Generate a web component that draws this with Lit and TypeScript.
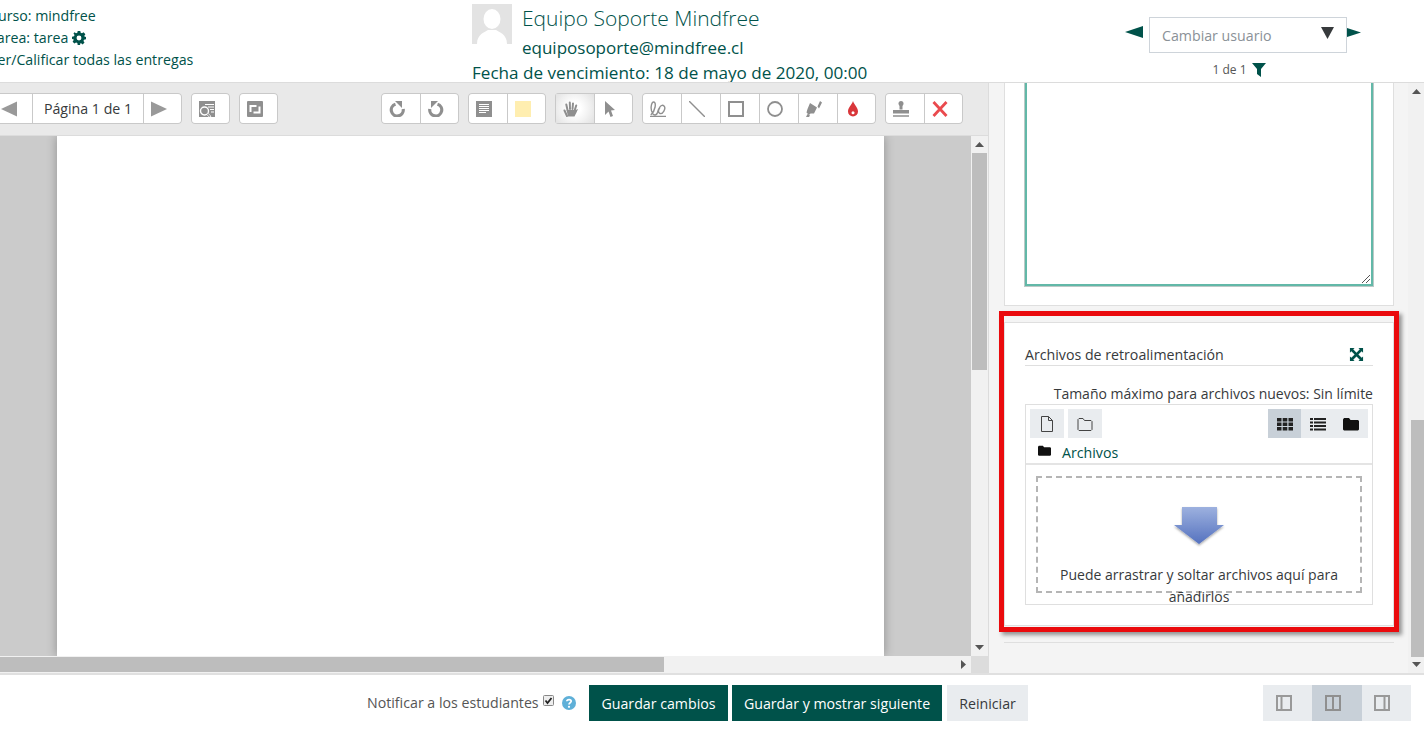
import { LitElement, html, css, svg } from 'lit';
import { customElement } from 'lit/decorators.js';

const G = '#8f8f8f';

// toolbar icons, all on a 16x16 box
const icons: Record<string, unknown> = {
  prev: svg`<polygon points="16,.5 16,15.500 0,8" fill="#999"/>`,
  next: svg`<polygon points="0,.5 0,15.500 16,8" fill="#999"/>`,
  search: svg`<rect x="0" y="0" width="16" height="16" fill="${G}"/><path d="M6 3.500h9M9 6h6M11 8.500h4M12 11h3" stroke="#fff" stroke-width="1"/><circle cx="5.500" cy="10" r="4" fill="${G}" stroke="#fff" stroke-width="1.400"/><path d="M8.500 13l3 3" stroke="#fff" stroke-width="2.400"/><path d="M8.500 13l2.500 2.500" stroke="${G}" stroke-width="1.200"/>`,
  expand: svg`<rect x="0" y="0" width="16" height="16" rx="1" fill="${G}"/><path d="M3.500 11V5h6M12.500 5.500v6h-6" fill="none" stroke="#fff" stroke-width="2"/>`,
  ccw: svg`<path d="M6.500 3.200A6 6 0 1 0 14.200 8" fill="none" stroke="${G}" stroke-width="3.200"/><polygon points="6,0 13,0 13,7" fill="${G}"/>`,
  cw: svg`<path d="M9.500 3.200A6 6 0 1 1 1.800 8" fill="none" stroke="${G}" stroke-width="3.200"/><polygon points="10,0 3,0 3,7" fill="${G}"/>`,
  note: svg`<rect x="0" y="0" width="16" height="16" fill="${G}"/><path d="M3 3.500h10M3 5.500h10M3 7.500h10M3 9.500h10M3 11.500h7" stroke="#fff" stroke-width="1"/>`,
  swatch: svg`<rect x="0" y="0" width="16" height="16" fill="#ffeeb0"/>`,
  hand: svg`<path d="M4 15L1.500 9.500M4.500 9L3.300 3.500M7 8L6.800 1.500M9.500 8L10 2.500M11.800 9L13.200 4.500" stroke="${G}" stroke-width="2" stroke-linecap="round"/><path d="M3.500 9h9L15 8c-1 3-2.500 5-3.500 7.500H5z" fill="${G}"/>`,
  pointer: svg`<polygon points="3,0 13,9 9,9.500 11,15 8.500,16 6.500,10.500 3,14" fill="${G}"/>`,
  draw: svg`<path d="M0 15.300h16" stroke="${G}" stroke-width="1.300"/><path d="M.8 14C5.500 10 6.500 1 3.800 1S-.2 9 3 13c2 2 4 .5 4.500-1.500C8.500 7 11.500 2.500 14 5s-1.500 8.500-4 7.500S8.500 8 10 7" fill="none" stroke="${G}" stroke-width="1.400"/>`,
  line: svg`<path d="M0 0l16 16" stroke="${G}" stroke-width="1.400"/>`,
  rect: svg`<rect x="1" y="1" width="14" height="14" fill="none" stroke="${G}" stroke-width="2"/>`,
  oval: svg`<circle cx="8" cy="8" r="7" fill="none" stroke="${G}" stroke-width="1.800"/>`,
  marker: svg`<path d="M4 2l7 4.500-3 6H4.500L3 14 .5 11.500 1.500 8zM11.500 5.500L14 0l2 1.500-3 6zM0 16l1.500-3 2.500 1.500-1 1.500z" fill="${G}"/>`,
  drop: svg`<path d="M8 0c1.300 4 5 6.500 5 10.500a5 5 0 0 1-10 0C3 6.500 6.700 4 8 0z" fill="#d9363a"/><circle cx="8" cy="11.800" r="1.500" fill="#fff"/>`,
  stamp: svg`<circle cx="8" cy="2.600" r="2.500" fill="${G}"/><path d="M6.500 4h3v4.500h-3zM0 9h16v3.500H0z" fill="${G}"/><path d="M0 15h16" stroke="${G}" stroke-width="1.400"/>`,
  del: svg`<path d="M1.500 1l13 14M14.500 1l-13 14" stroke="#ea4a4e" stroke-width="2.800"/>`,
};

const ic = (name: string) => html`<svg class="tool-icon" viewBox="0 0 16 16">${icons[name]}</svg>`;

const toolGroups = [
  ['ccw', 'cw'],
  ['note', 'swatch'],
  ['hand', 'pointer'],
  ['draw', 'line', 'rect', 'oval', 'marker', 'drop'],
  ['stamp', 'del'],
];

@customElement('app-root')
export class AppRoot extends LitElement {
  static styles = css`
    :host {
      display: flex;
      flex-direction: column;
      width: 1424px;
      height: 729px;
      position: relative;
      overflow: hidden;
      background: #fff;
      font-family: 'Open Sans', 'Noto Sans', sans-serif;
      font-size: 14.200px;
      color: #373a3c;
    }
    a { color: #00524a; text-decoration: none; }

    /* header */
    .header {
      height: 82px;
      flex: none;
      display: flex;
      border-bottom: 1px solid #dcdcdc;
      overflow: hidden;
    }
    .crumbs {
      width: 472px;
      flex: none;
      margin-left: -11px;
      margin-right: 11px;
      padding-top: 5px;
      line-height: 22px;
      color: #00524a;
    }
    .gear { width: 14px; height: 14px; vertical-align: -2px; margin-left: 0; }
    .user { width: 653px; flex: none; padding-top: 4px; color: #00524a; }
    .user-top { display: flex; gap: 10px; }
    .avatar { width: 40px; height: 40px; background: #e3e3e3; flex: none; }
    .user-name { font-size: 21px; font-weight: 300; line-height: 29px; white-space: nowrap; }
    .user-mail { font-size: 17px; font-weight: 400; line-height: 27px; margin-top: 1px; }
    .user-due { font-size: 17.100px; line-height: 24px; white-space: nowrap; }
    .switcher { width: 240px; flex: none; padding-top: 17px; }
    .switch-row { display: flex; align-items: flex-start; }
    .arrow { width: 18px; height: 12px; margin: 9px 0 0; fill: #00524a; flex: none; }
    .arrow.right { width: 14px; height: 9px; margin-top: 11px; }
    .select {
      width: 198px;
      height: 36px;
      flex: none;
      box-sizing: border-box;
      margin-left: 6px;
      border: 1px solid #ced4da;
      padding: 0 12px;
      display: flex;
      justify-content: space-between;
      line-height: 35px;
      color: #8a9197;
    }
    .caret { width: 13px; height: 12px; margin: 9px 0 0 0; fill: #373a3c; }
    .count {
      display: flex;
      justify-content: center;
      align-items: center;
      gap: 5px;
      width: 222px;
      margin-top: 9px;
      margin-left: 3px;
      font-size: 12px;
      line-height: 16px;
      color: #555;
    }
    .funnel { width: 14px; height: 14px; fill: #00524a; }

    /* main area */
    .main { flex: 1; min-height: 0; display: flex; }
    .doc {
      width: 988px;
      flex: none;
      display: flex;
      flex-direction: column;
      border-right: 1px solid #dcdcdc;
    }
    .tools {
      height: 53px;
      flex: none;
      box-sizing: border-box;
      background: #e9e9e9;
      border-bottom: 1px solid #dcdcdc;
      padding-top: 10px;
      display: flex;
      align-items: flex-start;
      gap: 9px;
    }
    .group {
      display: flex;
      height: 31px;
      background: #fff;
      border-radius: 4px;
      box-shadow: inset 0 0 0 1px #c9c9c9;
      overflow: hidden;
    }
    .group.first { margin-left: -7px; }
    .group.rotate { margin-left: 94.100px; }
    .tool {
      width: 39px;
      box-sizing: border-box;
      padding-right: 8px;
      display: flex;
      align-items: center;
      justify-content: center;
    }
    .tool + .tool { border-left: 1px solid #c9c9c9; }
    .tool.on {
      background: radial-gradient(circle, #fff 25%, #e0e0e0 100%);
      box-shadow: inset 1px 1px 0 #c9c9c9, inset 0 -1px 0 #c9c9c9;
    }
    .tool-icon { width: 16px; height: 16px; flex: none; }
    .tool.wide { width: 111px; padding-right: 0; white-space: nowrap; }

    .viewer {
      flex: 1;
      min-height: 0;
      display: grid;
      grid-template-columns: 1fr 17px;
      grid-template-rows: 1fr 17px;
    }
    .canvas {
      background: #cbcbcb;
      padding-left: 57px;
      overflow: hidden;
    }
    .page {
      width: 827px;
      height: 100%;
      background: #fff;
      box-shadow: 0 0 10px rgba(0, 0, 0, 0.3);
    }
    .vbar {
      background: #f1f1f1;
      display: flex;
      flex-direction: column;
      align-items: center;
      padding-top: 17px;
      position: relative;
    }
    .vthumb { width: 15px; height: 217px; background: #bdbdbd; }
    .sb-arrow { width: 9px; height: 5px; fill: #555; position: absolute; }
    .sb-arrow.up { top: 6px; }
    .sb-arrow.down { bottom: 6px; }
    .hbar { background: #f1f1f1; display: flex; position: relative; padding: 1px 0; }
    .hthumb { width: 664px; background: #bdbdbd; }
    .hbar .sb-arrow { width: 5px; height: 9px; right: 5px; top: 4px; }
    .corner { background: #dcdcdc; }

    /* right panel */
    .side {
      flex: 1;
      min-width: 0;
      background: #f4f4f4;
      display: flex;
    }
    .side-body { flex: 1; padding-left: 15px; overflow: hidden; }
    .card {
      width: 390px;
      box-sizing: border-box;
      background: #fff;
      border: 1px solid #dfdfdf;
    }
    .card.notes { height: 223px; border-top: 0; padding: 0 20px; }
    .notes-box {
      height: 203px;
      box-sizing: border-box;
      background: #fff;
      border: 2px solid #62b8a8;
      border-top: 0;
      box-shadow: 0 0 0 1px #bcc9c6;
      position: relative;
    }
    .grip { position: absolute; right: 0; bottom: 0; width: 10px; height: 10px; }
    .card.files { height: 304px; margin-top: 16px; padding: 0 20px; }
    .files-title {
      display: flex;
      justify-content: space-between;
      margin-top: 22px;
      height: 20px;
      line-height: 19px;
      border-bottom: 1px solid #dfdfdf;
    }
    .expand { width: 15px; height: 15px; margin: 2px 9px 0 0; fill: #00524a; }
    .limit {
      text-align: right;
      font-size: 14px;
      line-height: 20px;
      margin-top: 18px;
      white-space: nowrap;
    }
    .picker {
      height: 201px;
      box-sizing: border-box;
      border: 1px solid #dfdfdf;
      display: flex;
      flex-direction: column;
    }
    .picker-tools { display: flex; gap: 4px; padding: 4px 4px 0; }
    .pbtn {
      width: 34px;
      height: 29px;
      background: #e9ecef;
      display: flex;
      align-items: center;
      justify-content: center;
    }
    .pbtn svg { width: 16px; height: 16px; }
    .views { display: flex; margin-left: auto; }
    .views .pbtn { width: 33.400px; }
    .views .pbtn.on { background: #c8d0d8; }
    .path {
      height: 27px;
      flex: none;
      box-sizing: border-box;
      border-bottom: 2px solid #e4e4e4;
      display: flex;
      align-items: center;
      gap: 11px;
      padding-left: 12px;
      line-height: 30px;
    }
    .path svg { width: 13px; height: 13px; margin-top: -1px; }
    .path a { margin-top: 4px; }
    .drop {
      height: 117px;
      box-sizing: border-box;
      margin: 11px 10px 0;
      border: 2px dashed #b5b5b5;
      text-align: center;
      font-size: 14px;
      line-height: 22px;
    }
    .drop svg { display: block; width: 52px; height: 42px; margin: 28px auto 16px; }
    .rule { height: 1px; width: 390px; background: #dfdfdf; margin-top: 16px; }
    .sidebar-scroll {
      width: 16px;
      flex: none;
      background: #f1f1f1;
      display: flex;
      flex-direction: column;
      justify-content: flex-end;
      align-items: flex-end;
      padding-bottom: 16px;
      position: relative;
    }
    .sidebar-scroll .sb-arrow { right: 3px; }
    .side-thumb { width: 13px; height: 237px; background: #bdbdbd; }

    /* highlight box drawn on the screenshot */
    .mark {
      position: absolute;
      left: 999px;
      top: 311px;
      width: 400px;
      height: 321px;
      box-sizing: border-box;
      border: 5px solid #ea0a0d;
      box-shadow: 3px 3px 4px rgba(0, 0, 0, 0.4);
      pointer-events: none;
    }

    /* footer */
    .footer {
      height: 56px;
      flex: none;
      box-sizing: border-box;
      border-top: 2px solid #e0e0e0;
      padding-top: 10px;
      display: flex;
      align-items: flex-start;
    }
    .notify {
      margin-left: 367px;
      width: 209px;
      flex: none;
      display: flex;
      align-items: center;
      height: 34px;
      white-space: nowrap;
      color: #555;
    }
    .check { width: 11px; height: 11px; margin: -3px 0 0 4px; flex: none; }
    .help { width: 14px; height: 14px; margin: 2px 0 0 8px; flex: none; }
    .btn {
      height: 36px;
      box-sizing: border-box;
      display: flex;
      align-items: center;
      justify-content: center;
      white-space: nowrap;
    }
    .btn.primary { background: #00524a; color: #fff; }
    .btn.save { width: 139px; margin-left: 13px; }
    .btn.next { width: 210px; margin-left: 4px; }
    .btn.reset { width: 81px; margin-left: 5px; background: #e9ecef; color: #373a3c; }
    .layouts { display: flex; margin-left: auto; margin-right: 13px; }
    .layout {
      width: 49.300px;
      height: 36px;
      box-sizing: border-box;
      padding-right: 8px;
      background: #e9ecef;
      display: flex;
      align-items: center;
      justify-content: center;
    }
    .layout.on { background: #c8d0d8; }
    .layout svg { width: 16px; height: 16px; }
  `;

  renderToolbar() {
    return html`
      <div class="tools">
        <div class="group first">
          <div class="tool">${ic('prev')}</div>
          <div class="tool wide">Página 1 de 1</div>
          <div class="tool">${ic('next')}</div>
        </div>
        <div class="group"><div class="tool">${ic('search')}</div></div>
        <div class="group"><div class="tool">${ic('expand')}</div></div>
        ${toolGroups.map((g, i) => html`
          <div class="group ${i === 0 ? 'rotate' : ''}">
            ${g.map(n => html`<div class="tool ${n === 'hand' ? 'on' : ''}">${ic(n)}</div>`)}
          </div>
        `)}
      </div>
    `;
  }

  renderFiles() {
    return html`
      <div class="card files">
        <div class="files-title">
          <span>Archivos de retroalimentación</span>
          <svg class="expand" viewBox="0 0 16 16">
            <path d="M1 1h5L4.500 2.500 8 6l3.500-3.500L10 1h5v5l-1.500-1.500L10 8l3.500 3.500L15 10v5h-5l1.500-1.500L8 10l-3.500 3.500L6 15H1v-5l1.500 1.500L6 8 2.500 4.500 1 6z"/>
          </svg>
        </div>
        <div class="limit">Tamaño máximo para archivos nuevos: Sin límite</div>
        <div class="picker">
          <div class="picker-tools">
            <div class="pbtn">
              <svg viewBox="0 0 16 16"><path d="M2.500 .5h7l4 4v11h-11zM9.500 .5v4h4" fill="none" stroke="#444" stroke-width="1"/></svg>
            </div>
            <div class="pbtn">
              <svg viewBox="0 0 16 16"><path d="M1 13.500V3.500l1-1h4l1.500 2H14l1 1v8l-1 1H2z" fill="none" stroke="#444" stroke-width="1"/></svg>
            </div>
            <div class="views">
              <div class="pbtn on">
                <svg viewBox="0 0 16 16" fill="#222"><path d="M0 2h4.500v3.500H0zM5.700 2h4.600v3.500H5.700zM11.500 2H16v3.500h-4.500zM0 6.500h4.500V10H0zM5.700 6.500h4.600V10H5.700zM11.500 6.500H16V10h-4.500zM0 11h4.500v3.500H0zM5.700 11h4.600v3.500H5.700zM11.500 11H16v3.500h-4.500z"/></svg>
              </div>
              <div class="pbtn">
                <svg viewBox="0 0 16 16" fill="#222"><path d="M0 2h3v2H0zM4 2h12v2H4zM0 5.500h3v2H0zM4 5.500h12v2H4zM0 9h3v2H0zM4 9h12v2H4zM0 12.500h3v2H0zM4 12.500h12v2H4z"/></svg>
              </div>
              <div class="pbtn">
                <svg viewBox="0 0 16 16" fill="#111"><path d="M0 3.500l1-1.500h5l1.500 2H15l1 1v8.500l-1 1H1l-1-1z"/></svg>
              </div>
            </div>
          </div>
          <div class="path">
            <svg viewBox="0 0 16 16" fill="#111"><path d="M0 3.500l1-1.500h5l1.500 2H15l1 1v8.500l-1 1H1l-1-1z"/></svg>
            <a>Archivos</a>
          </div>
          <div class="drop">
            <svg viewBox="0 0 52 42">
              <defs>
                <linearGradient id="dn" x1="0" y1="0" x2="0" y2="1">
                  <stop offset="0" stop-color="#9db1df"/>
                  <stop offset="1" stop-color="#5572bf"/>
                </linearGradient>
                <filter id="sh"><feDropShadow dx="0" dy="1.500" stdDeviation="1.200" flood-opacity="0.350"/></filter>
              </defs>
              <polygon points="9,1 44,1 44,19 51,19 26,38 1,19 9,19" fill="url(#dn)" filter="url(#sh)"/>
            </svg>
            Puede arrastrar y soltar archivos aquí para añadirlos
          </div>
        </div>
      </div>
    `;
  }

  render() {
    return html`
      <div class="header">
        <div class="crumbs">
          <div>Curso: mindfree</div>
          <div>Tarea: tarea
            <svg class="gear" viewBox="0 0 16 16">
              <path fill="#00524a" fill-rule="evenodd" d="M6.500 0h3l.4 2.100 1.500.6L13.200 1.500l2.100 2.100-1.200 1.800.6 1.500L16 6.500v3l-2.300.4-.6 1.500 1.200 1.800-2.100 2.100-1.800-1.200-1.500.6L9.500 16h-3l-.4-2.300-1.500-.6-1.800 1.200L.7 12.200l1.200-1.800-.6-1.500L0 9.500v-3l2.300-.4.6-1.500L1.700 2.800 2.800 1.500l1.800 1.200 1.500-.6zM8 5.200a2.800 2.800 0 1 0 0 5.600 2.800 2.800 0 0 0 0-5.600z"/>
            </svg>
          </div>
          <div>Ver/Calificar todas las entregas</div>
        </div>
        <div class="user">
          <div class="user-top">
            <svg class="avatar" viewBox="0 0 40 40">
              <ellipse cx="20" cy="15" rx="8.500" ry="10" fill="#fff"/>
              <path d="M5 40c0-10 8-12 11-14h8c3 2 11 4 11 14z" fill="#fff"/>
            </svg>
            <div class="user-name">Equipo Soporte Mindfree
              <div class="user-mail">equiposoporte@mindfree.cl</div>
            </div>
          </div>
          <div class="user-due">Fecha de vencimiento: 18 de mayo de 2020, 00:00</div>
        </div>
        <div class="switcher">
          <div class="switch-row">
            <svg class="arrow" viewBox="0 0 18 12"><polygon points="0,6 18,0 18,12"/></svg>
            <div class="select">
              <span>Cambiar usuario</span>
              <svg class="caret" viewBox="0 0 13 12"><polygon points="0,0 13,0 6.500,12"/></svg>
            </div>
            <svg class="arrow right" viewBox="0 0 14 9"><polygon points="0,0 14,4.500 0,9"/></svg>
          </div>
          <div class="count">
            <span>1 de 1</span>
            <svg class="funnel" viewBox="0 0 14 14"><polygon points="0,0 14,0 9,6 9,14 5,11 5,6"/></svg>
          </div>
        </div>
      </div>

      <div class="main">
        <div class="doc">
          ${this.renderToolbar()}
          <div class="viewer">
            <div class="canvas"><div class="page"></div></div>
            <div class="vbar">
              <svg class="sb-arrow up" viewBox="0 0 9 5"><polygon points="4.500,0 9,5 0,5"/></svg>
              <div class="vthumb"></div>
              <svg class="sb-arrow down" viewBox="0 0 9 5"><polygon points="0,0 9,0 4.500,5"/></svg>
            </div>
            <div class="hbar">
              <div class="hthumb"></div>
              <svg class="sb-arrow" viewBox="0 0 5 9"><polygon points="0,0 5,4.500 0,9"/></svg>
            </div>
            <div class="corner"></div>
          </div>
        </div>
        <div class="side">
          <div class="side-body">
            <div class="card notes">
              <div class="notes-box">
                <svg class="grip" viewBox="0 0 10 10"><path d="M1 9l8-8M5 9l4-4" stroke="#555" stroke-width="1"/></svg>
              </div>
            </div>
            ${this.renderFiles()}
            <div class="rule"></div>
          </div>
          <div class="sidebar-scroll">
            <svg class="sb-arrow up" viewBox="0 0 9 5"><polygon points="4.500,0 9,5 0,5"/></svg>
            <div class="side-thumb"></div>
            <svg class="sb-arrow down" viewBox="0 0 9 5"><polygon points="0,0 9,0 4.500,5"/></svg>
          </div>
        </div>
      </div>

      <div class="footer">
        <div class="notify">
          Notificar a los estudiantes
          <svg class="check" viewBox="0 0 11 11">
            <rect x=".5" y=".5" width="10" height="10" rx="1" fill="#eee" stroke="#888"/>
            <path d="M2.500 5.500l2 2.500 4-5" fill="none" stroke="#222" stroke-width="1.800"/>
          </svg>
          <svg class="help" viewBox="0 0 14 14">
            <circle cx="7" cy="7" r="7" fill="#5fb0d8"/>
            <path d="M4.800 5.300C5 3 9.200 3 9.200 5.300 9.200 6.800 7 6.800 7 8.500" fill="none" stroke="#fff" stroke-width="1.700"/>
            <circle cx="7" cy="10.800" r="1.100" fill="#fff"/>
          </svg>
        </div>
        <div class="btn primary save">Guardar cambios</div>
        <div class="btn primary next">Guardar y mostrar siguiente</div>
        <div class="btn reset">Reiniciar</div>
        <div class="layouts">
          <div class="layout">
            <svg viewBox="0 0 16 16"><path d="M1 1h14v14H1zM5.500 1v14" fill="none" stroke="#999" stroke-width="2"/></svg>
          </div>
          <div class="layout on">
            <svg viewBox="0 0 16 16"><path d="M1 1h14v14H1zM8 1v14" fill="none" stroke="#8f8f8f" stroke-width="2"/></svg>
          </div>
          <div class="layout">
            <svg viewBox="0 0 16 16"><path d="M1 1h14v14H1zM10.500 1v14" fill="none" stroke="#999" stroke-width="2"/></svg>
          </div>
        </div>
      </div>

      <div class="mark"></div>
    `;
  }
}
